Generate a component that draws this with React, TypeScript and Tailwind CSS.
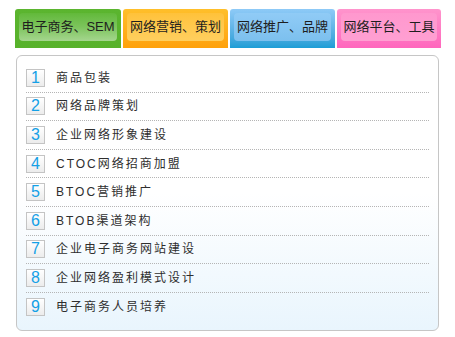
import React from 'react';

const tabs = [
  {
    label: '电子商务、SEM',
    outer: 'w-[106px] bg-gradient-to-b from-[#5bb52f] to-[#57b22b]',
    inner: 'bg-gradient-to-b from-[#62b93a] via-[#7cc45c] to-[#a5d68e]',
  },
  {
    label: '网络营销、策划',
    outer: 'w-[105px] bg-gradient-to-b from-[#ffbf2a] to-[#ffa10a]',
    inner: 'bg-gradient-to-b from-[#ffc23a] to-[#ffcf5e]',
  },
  {
    label: '网络推广、品牌',
    outer: 'w-[105px] bg-gradient-to-b from-[#8ecaf7] to-[#1b9ed6]',
    inner: 'bg-gradient-to-b from-[#90cbf6] to-[#7cc0ee]',
  },
  {
    label: '网络平台、工具',
    outer: 'w-[104px] bg-gradient-to-b from-[#ff94cc] to-[#ff66bd]',
    inner: 'bg-gradient-to-b from-[#ff98ce] to-[#ff9fd2]',
  },
];

const items = [
  '商品包装',
  '网络品牌策划',
  '企业网络形象建设',
  'CTOC网络招商加盟',
  'BTOC营销推广',
  'BTOB渠道架构',
  '企业电子商务网站建设',
  '企业网络盈利模式设计',
  '电子商务人员培养',
];

export default function App() {
  return (
    <div className="w-[455px] h-[337px] bg-white overflow-hidden font-['Liberation_Sans','Noto_Sans_CJK_SC',sans-serif]">
      {/* Tabs */}
      <div className="flex gap-[2px] pl-[15px] pt-[9px]">
        {tabs.map((t) => (
          <div key={t.label} className={`h-[39px] rounded-t-[3px] px-[4px] pt-[4px] pb-[7px] ${t.outer}`}>
            <div className={`h-full rounded-[4px] flex items-center justify-center text-[13px] text-[#1e1e1e] ${t.inner}`}>
              {t.label}
            </div>
          </div>
        ))}
      </div>

      {/* Panel */}
      <div className="ml-[16px] mt-[7px] w-[423px] h-[276px] border border-[#c6c6c6] rounded-[6px] bg-gradient-to-b from-white via-white to-[#e9f5fd] px-[9px] pt-[8px]">
        {items.map((text, i) => (
          <div
            key={text}
            className={`h-[28.6px] flex items-center ${i < items.length - 1 ? 'border-b border-dotted border-[#b5b5b5]' : ''}`}
          >
            <div className="w-[19px] h-[18px] border border-[#c4c4c4] bg-gradient-to-b from-white to-[#ececec] flex items-center justify-center text-[16px] leading-none text-[#14a0e6] font-['Liberation_Sans',sans-serif]">
              {i + 1}
            </div>
            <span className="ml-[11px] text-[12px] tracking-[2px] text-[#2e2e2e]">{text}</span>
          </div>
        ))}
      </div>
    </div>
  );
}
